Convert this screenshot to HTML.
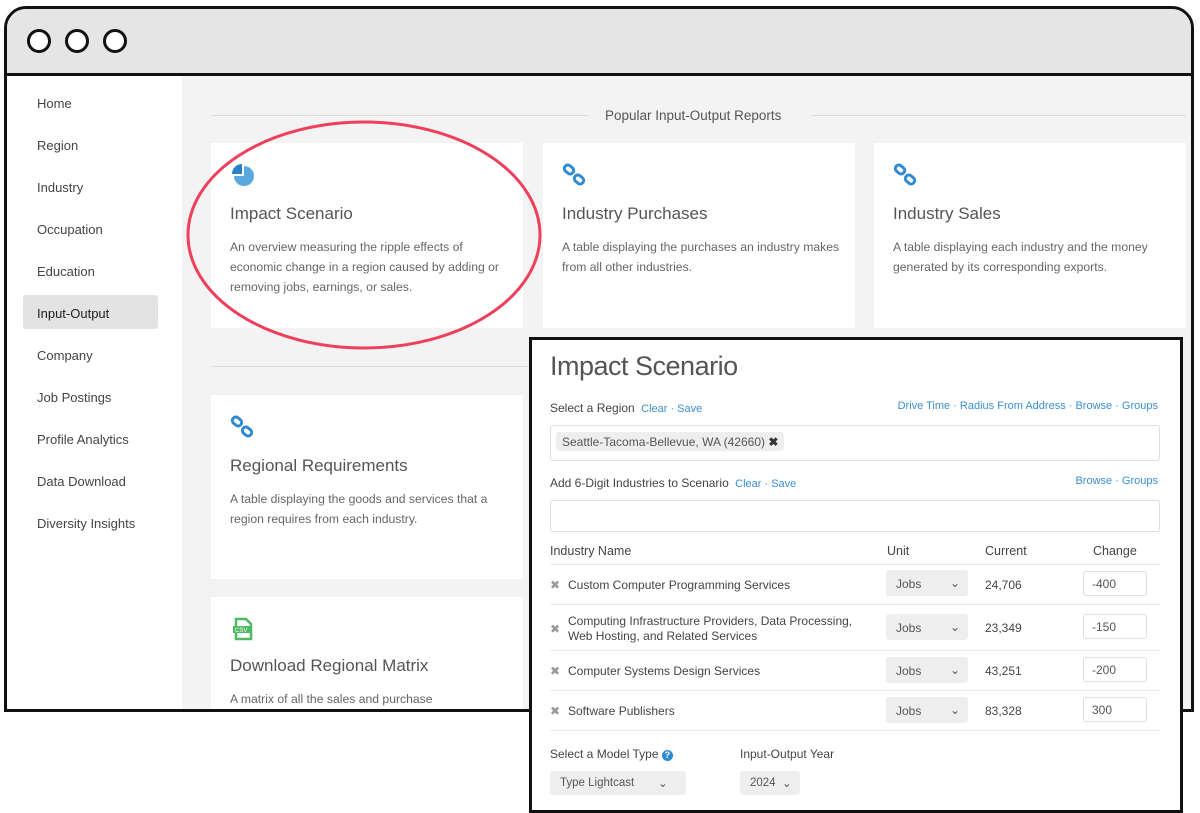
<!DOCTYPE html>
<html><head><meta charset="utf-8"><style>
*{box-sizing:border-box;margin:0;padding:0}
body{width:1200px;height:813px;background:#fff;position:relative;overflow:hidden;font-family:"Liberation Sans",sans-serif;color:#555}
.frame{position:absolute;left:4px;top:6px;width:1190px;height:706px;border:3px solid #111;border-radius:22px 22px 0 0;overflow:hidden;background:#f3f3f3}
.bar{position:absolute;left:0;top:0;right:0;height:67px;background:#e5e5e5;border-bottom:3px solid #111}
.dot{position:absolute;top:20px;width:24px;height:24px;border:3px solid #111;border-radius:50%;background:#fff}
.side{position:absolute;left:0;top:67px;width:175px;bottom:0;background:#fff}
.side div{position:absolute;left:30px;font-size:13px;color:#444}
.side .sel{position:absolute;left:16px;top:219px;width:135px;height:34px;background:#e3e3e3;border-radius:3px}
.card{position:absolute;background:#fff;width:312px}
.card h3{position:absolute;left:19px;font-size:17px;font-weight:normal;color:#555}
.card p{position:absolute;left:19px;right:14px;font-size:12.2px;line-height:20px;color:#666}
.ic{position:absolute;left:20px;top:20px}
.ov{position:absolute;left:529px;top:337px;width:654px;height:476px;border:3px solid #111;background:#fff}
.ov *{position:absolute}
.t{font-size:12px;color:#444;white-space:nowrap}
.a{color:#3a8fd0}
.box{border:1px solid #ddd;border-radius:3px}
.sel2{background:#eee;border-radius:3px;font-size:12px;color:#555;padding:7px 0 0 10px}
.in{border:1px solid #ddd;border-radius:3px;font-size:12px;color:#555;padding:5px 0 0 8px;width:64px;height:25px}
.hr{height:1px;background:#e6e6e6;left:18px;width:610px}
.x{font-size:12px;color:#999}
</style></head><body>
<div class="frame">
 <div class="bar"><div class="dot" style="left:20px"></div><div class="dot" style="left:58px"></div><div class="dot" style="left:96px"></div></div>
 <div class="side">
  <div class="sel"></div>
  <div style="top:20px">Home</div><div style="top:62px">Region</div><div style="top:104px">Industry</div><div style="top:146px">Occupation</div><div style="top:188px">Education</div><div style="top:230px;color:#222">Input-Output</div><div style="top:272px">Company</div><div style="top:314px">Job Postings</div><div style="top:356px">Profile Analytics</div><div style="top:398px">Data Download</div><div style="top:440px">Diversity Insights</div>
 </div>
 <div style="position:absolute;left:204px;top:106px;width:378px;height:1px;background:#ddd"></div>
 <div style="position:absolute;left:804px;top:106px;width:375px;height:1px;background:#ddd"></div>
 <div style="position:absolute;left:598px;top:99px;font-size:13.5px;color:#555">Popular Input-Output Reports</div>
 <div style="position:absolute;left:204px;top:357px;width:330px;height:1px;background:#ddd"></div>
</div>
<div class="card" style="left:211px;top:143px;height:185px">
 <svg class="ic" width="24" height="24" viewBox="0 0 24 24"><path d="M13 3A10 10 0 1 1 3 13h10z" fill="#5aa9de"/><path d="M11 1A10 10 0 0 0 1 11h10z" fill="#2b7fc4"/></svg>
 <h3 style="top:61px">Impact Scenario</h3>
 <p style="top:94px">An overview measuring the ripple effects of economic change in a region caused by adding or removing jobs, earnings, or sales.</p>
</div>
<div class="card" style="left:543px;top:143px;height:185px">
 <svg class="ic" width="24" height="24" viewBox="0 0 24 24"><g fill="none" stroke="#2f8ad0" stroke-width="3"><rect x="1" y="3" width="10" height="7" rx="3.5" transform="rotate(40 6 6.5)"/><rect x="11" y="13" width="10" height="7" rx="3.5" transform="rotate(40 16 16.5)"/></g></svg>
 <h3 style="top:61px">Industry Purchases</h3>
 <p style="top:94px">A table displaying the purchases an industry makes from all other industries.</p>
</div>
<div class="card" style="left:874px;top:143px;height:185px">
 <svg class="ic" width="24" height="24" viewBox="0 0 24 24"><g fill="none" stroke="#2f8ad0" stroke-width="3"><rect x="1" y="3" width="10" height="7" rx="3.5" transform="rotate(40 6 6.5)"/><rect x="11" y="13" width="10" height="7" rx="3.5" transform="rotate(40 16 16.5)"/></g></svg>
 <h3 style="top:61px">Industry Sales</h3>
 <p style="top:94px">A table displaying each industry and the money generated by its corresponding exports.</p>
</div>
<div class="card" style="left:211px;top:395px;height:184px">
 <svg class="ic" width="24" height="24" viewBox="0 0 24 24"><g fill="none" stroke="#2f8ad0" stroke-width="3"><rect x="1" y="3" width="10" height="7" rx="3.5" transform="rotate(40 6 6.5)"/><rect x="11" y="13" width="10" height="7" rx="3.5" transform="rotate(40 16 16.5)"/></g></svg>
 <h3 style="top:61px">Regional Requirements</h3>
 <p style="top:94px">A table displaying the goods and services that a region requires from each industry.</p>
</div>
<div class="card" style="left:211px;top:597px;height:112px">
 <svg class="ic" width="24" height="24" viewBox="0 0 24 24"><path d="M5 2h10l5 5v15H5z" fill="none" stroke="#4cb963" stroke-width="2.5"/><rect x="2" y="9" width="17" height="7" fill="#4cb963"/><text x="4" y="15" font-size="6" fill="#fff" font-family="Liberation Sans">CSV</text></svg>
 <h3 style="top:59px">Download Regional Matrix</h3>
 <p style="top:92px">A matrix of all the sales and purchase</p>
</div>
<svg style="position:absolute;left:0;top:0" width="1200" height="813"><ellipse cx="364" cy="235" rx="176" ry="113" fill="none" stroke="#ef3f5b" stroke-width="3"/></svg>
<div class="ov">
 <div style="left:18px;top:11px;font-size:27px;color:#555;letter-spacing:-0.5px">Impact Scenario</div>
 <div class="t" style="left:18px;top:61px">Select a Region <span class="a" style="position:static;font-size:11px">&nbsp;Clear · Save</span></div>
 <div class="t a" style="right:22px;top:60px;font-size:11px">Drive Time · Radius From Address · Browse · Groups</div>
 <div class="box" style="left:18px;top:85px;width:610px;height:36px"></div>
 <div style="left:24px;top:92px;height:19px;background:#eee;border-radius:3px;font-size:12px;color:#555;padding:3px 6px;white-space:nowrap">Seattle-Tacoma-Bellevue, WA (42660) <b style="position:static;color:#333">✖</b></div>
 <div class="t" style="left:18px;top:136px">Add 6-Digit Industries to Scenario <span class="a" style="position:static;font-size:11px">&nbsp;Clear · Save</span></div>
 <div class="t a" style="right:22px;top:135px;font-size:11px">Browse · Groups</div>
 <div class="box" style="left:18px;top:160px;width:610px;height:32px"></div>
 <div class="t" style="left:18px;top:204px;font-size:12.5px">Industry Name</div>
 <div class="t" style="left:355px;top:204px;font-size:12.5px">Unit</div>
 <div class="t" style="left:453px;top:204px;font-size:12.5px">Current</div>
 <div class="t" style="left:561px;top:204px;font-size:12.5px">Change</div>
 <div class="hr" style="top:224px"></div>
 <div class="x" style="left:18px;top:238px">✖</div><div class="t" style="left:36px;top:238px">Custom Computer Programming Services</div>
 <div class="sel2" style="left:354px;top:230px;width:82px;height:26px">Jobs<span style="left:64px;top:6px">⌄</span></div><div class="t" style="left:453px;top:238px">24,706</div><div class="in" style="left:551px;top:231px">-400</div>
 <div class="hr" style="top:264px"></div>
 <div class="x" style="left:18px;top:282px">✖</div><div class="t" style="left:36px;top:274px;line-height:15px">Computing Infrastructure Providers, Data Processing,<br>Web Hosting, and Related Services</div>
 <div class="sel2" style="left:354px;top:274px;width:82px;height:26px">Jobs<span style="left:64px;top:6px">⌄</span></div><div class="t" style="left:453px;top:281px">23,349</div><div class="in" style="left:551px;top:274px">-150</div>
 <div class="hr" style="top:310px"></div>
 <div class="x" style="left:18px;top:324px">✖</div><div class="t" style="left:36px;top:324px">Computer Systems Design Services</div>
 <div class="sel2" style="left:354px;top:317px;width:82px;height:26px">Jobs<span style="left:64px;top:6px">⌄</span></div><div class="t" style="left:453px;top:324px">43,251</div><div class="in" style="left:551px;top:317px">-200</div>
 <div class="hr" style="top:350px"></div>
 <div class="x" style="left:18px;top:364px">✖</div><div class="t" style="left:36px;top:364px">Software Publishers</div>
 <div class="sel2" style="left:354px;top:357px;width:82px;height:26px">Jobs<span style="left:64px;top:6px">⌄</span></div><div class="t" style="left:453px;top:364px">83,328</div><div class="in" style="left:551px;top:357px">300</div>
 <div class="hr" style="top:390px"></div>
 <div class="t" style="left:18px;top:407px">Select a Model Type <span style="position:static;display:inline-block;width:11px;height:11px;border-radius:50%;background:#2f8ad0;color:#fff;font-size:9px;text-align:center;line-height:11px;font-weight:bold">?</span></div>
 <div class="t" style="left:208px;top:407px">Input-Output Year</div>
 <div class="sel2" style="left:18px;top:431px;width:136px;height:24px;font-size:11.5px;padding-top:6px">Type Lightcast<span style="left:108px;top:5px">⌄</span></div>
 <div class="sel2" style="left:208px;top:431px;width:60px;height:24px;font-size:11.5px;padding-top:6px">2024<span style="left:42px;top:5px">⌄</span></div>
</div>
</body></html>
